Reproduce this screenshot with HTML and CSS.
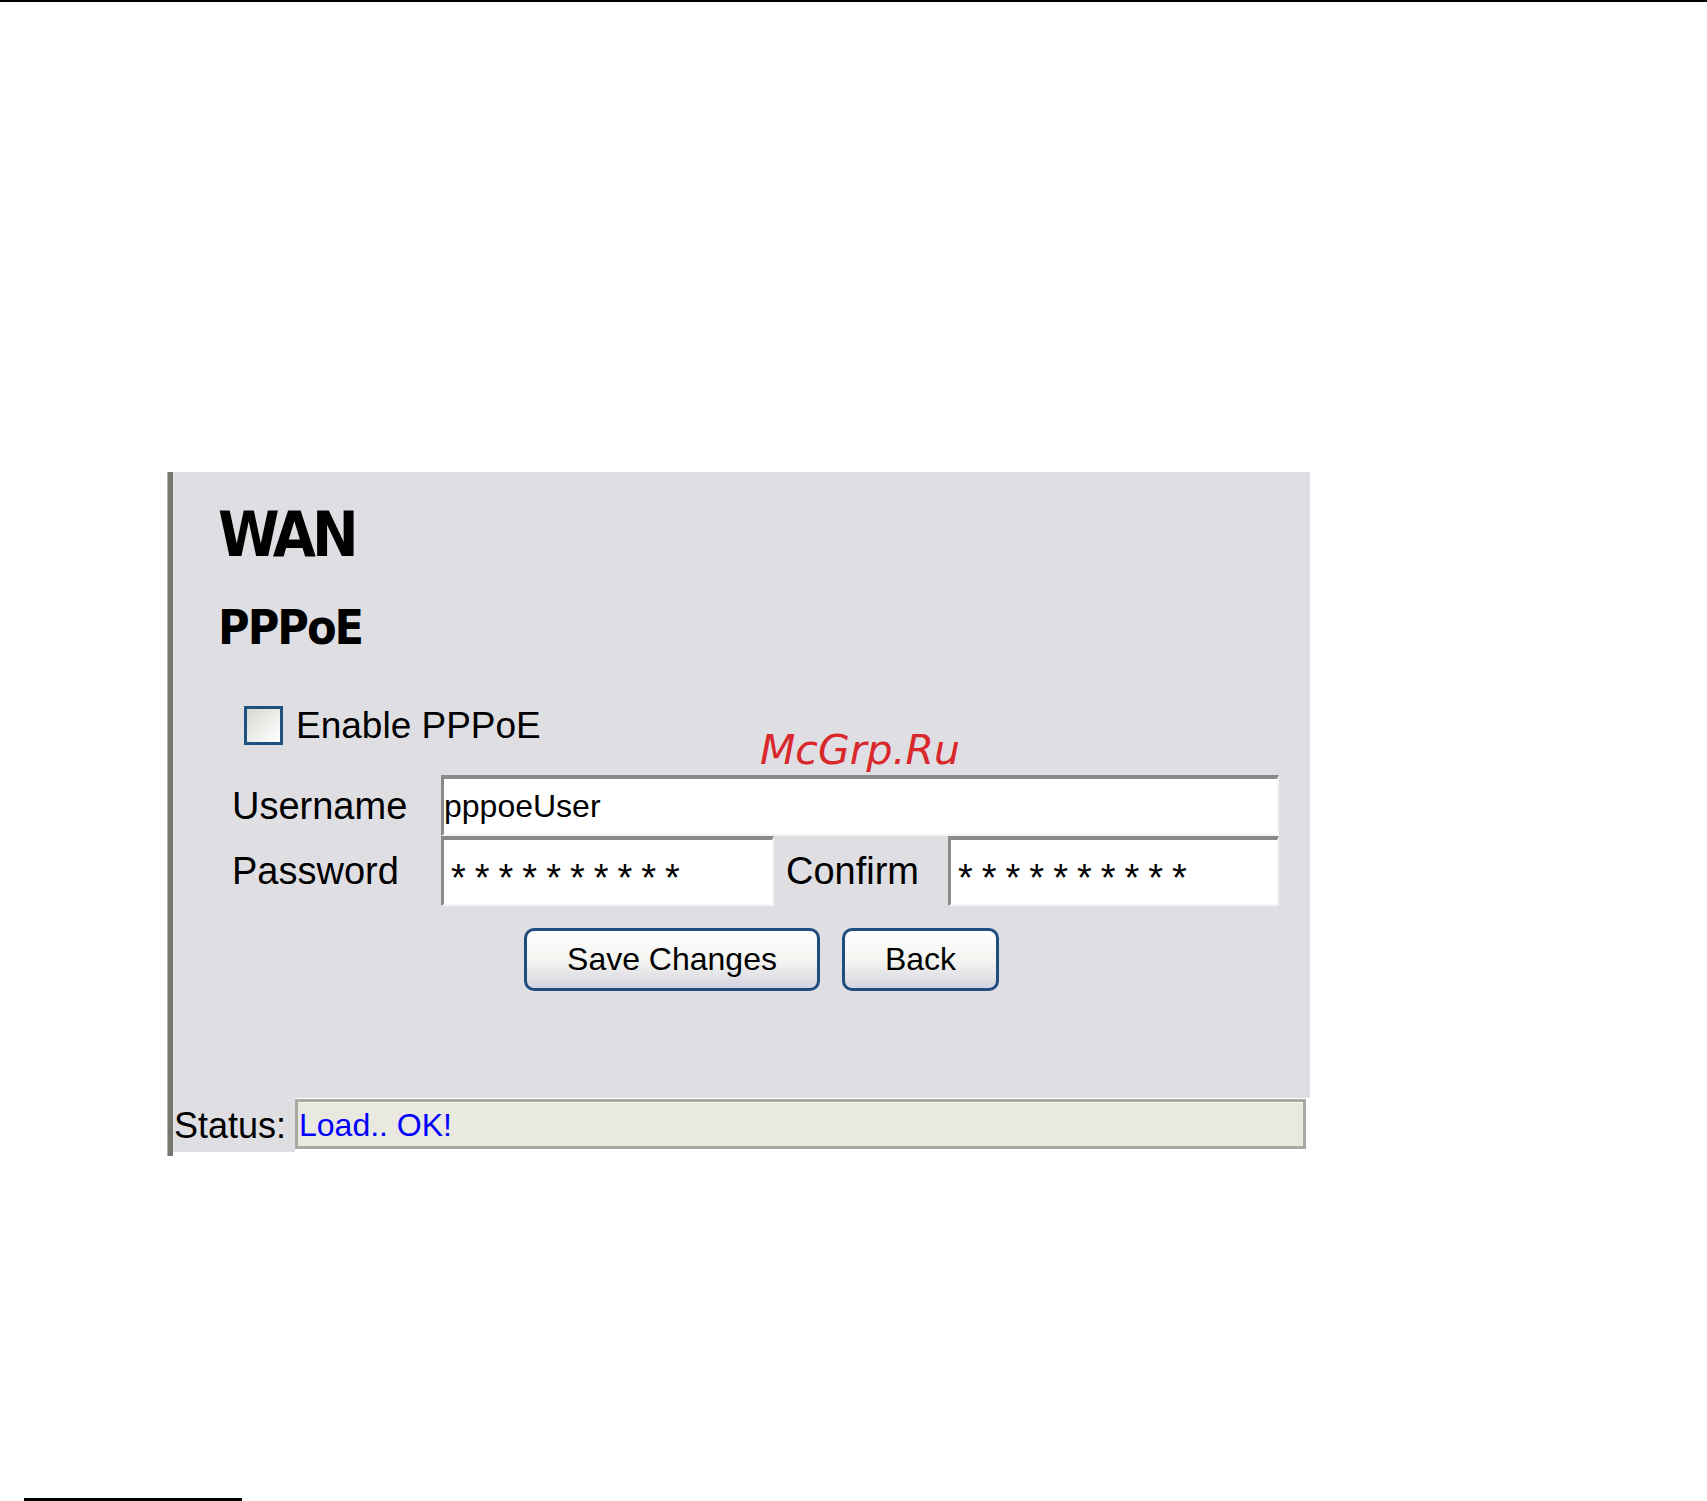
FILE: index.html
```html
<!DOCTYPE html>
<html lang="en">
<head>
    <meta charset="UTF-8" />
    <title>WAN - PPPoE</title>
    <link rel="stylesheet" href="styles.css">
</head>
<body>
    <div class="topline"></div>

    <div class="frame">
        <div class="panel">
            <h1>WAN</h1>
            <h2>PPPoE</h2>

            <label class="check">
                <input type="checkbox" id="enable_pppoe" />
                Enable PPPoE
            </label>

            <div class="mark">McGrp.Ru</div>

            <form class="grid" id="form-pppoe">
                <span class="lbl">Username</span>
                <input class="field wide" type="text" id="username" value="pppoeUser" />

                <span class="lbl">Password</span>
                <input class="field pass" type="text" id="password" value="**********" />
                <span class="lbl confirm">Confirm</span>
                <input class="field pass" type="text" id="confirm" value="**********" />

                <div class="buttons">
                    <button type="button" class="btn save">Save Changes</button>
                    <button type="button" class="btn back">Back</button>
                </div>
            </form>
        </div>

        <div class="status">
            <span class="status-label">Status:</span>
            <div class="status-box" id="status">Load.. OK!</div>
        </div>
    </div>

    <div class="footline"></div>
</body>
</html>
```

FILE: styles.css
```css
body {
    margin: 0;
    font-family: "Liberation Sans", Arial, sans-serif;
    color: #000;
    background-color: #fff;
}

.topline {
    height: 2px;
    background-color: #000;
}

.frame {
    margin: 470px 0 0 168px;
    width: 1137px;
    border-left: 5px solid #76766e;
    box-shadow: -1px 0 0 #b4b4ac;
}

.panel {
    position: relative;
    height: 626px;
    padding: 32px 0 0 45px;
    box-sizing: border-box;
    background-color: #dfdee3;
}

h1,
h2 {
    margin: 0;
    font-family: "Liberation Sans Narrow", "DejaVu Sans Condensed", "Liberation Sans", sans-serif;
    font-weight: bold;
}

h1 {
    font-size: 62px;
    line-height: 62px;
    letter-spacing: -4px;
}

h2 {
    margin-top: 37px;
    font-size: 48px;
    line-height: 48px;
    letter-spacing: -2px;
}

.check {
    display: flex;
    align-items: center;
    gap: 13px;
    height: 40px;
    margin: 54px 0 0 26px;
    font-size: 37px;
    line-height: 1;
}

.check input {
    appearance: none;
    width: 39px;
    height: 39px;
    margin: 0;
    border: 3px solid #1c5180;
    background: linear-gradient(135deg, #d8d8d2, #ffffff);
}

.mark {
    position: absolute;
    left: 587px;
    top: 258px;
    color: #d8282c;
    font-family: "DejaVu Sans", sans-serif;
    font-style: oblique;
    font-size: 41px;
    line-height: 1;
}

.grid {
    display: grid;
    grid-template-columns: 209px 333px 174px 331px;
    grid-template-rows: 61px 70px;
    align-items: center;
    margin: 30px 0 0 14px;
    font-size: 38px;
}

.lbl {
    line-height: 1;
}

.confirm {
    padding-left: 12px;
}

.field {
    align-self: stretch;
    margin: 0;
    padding: 0;
    box-sizing: border-box;
    border-style: solid;
    border-width: 4px 2px 2px 3px;
    border-color: #8a8a8a #f4f4f4 #f4f4f4 #8a8a8a;
    background-color: #fff;
    font-family: "Liberation Sans", Arial, sans-serif;
    font-size: 32px;
    color: #000;
    outline: none;
}

.wide {
    grid-column: 2 / 5;
}

.pass {
    padding: 12px 0 0 7px;
    font-size: 38px;
    letter-spacing: 9px;
}

.buttons {
    grid-column: 1 / 5;
    display: flex;
    justify-content: center;
    gap: 22px;
    margin-top: 22px;
    padding-left: 12px;
}

.btn {
    height: 63px;
    padding: 0;
    border: 3px solid #1f4d7e;
    border-radius: 10px;
    background: linear-gradient(#ffffff, #f3f3f0 55%, #d4d4e0);
    font-family: "Liberation Sans", Arial, sans-serif;
    font-size: 32px;
    color: #000;
    cursor: pointer;
}

.save {
    width: 296px;
}

.back {
    width: 157px;
}

.status {
    display: flex;
    height: 58px;
}

.status-label {
    width: 122px;
    height: 54px;
    padding: 2px 0 0 1px;
    box-sizing: border-box;
    background-color: #dfdee3;
    font-size: 36px;
    line-height: 52px;
}

.status-box {
    width: 1011px;
    height: 50px;
    margin-top: 1px;
    padding: 3px 0 0 1px;
    box-sizing: border-box;
    border: 3px solid #a9a9a2;
    box-shadow: inset 0 1px 0 #fafaf6;
    background-color: #e9e8e1;
    color: #0000ff;
    font-size: 32px;
    line-height: 41px;
}

.footline {
    margin: 342px 0 0 24px;
    width: 218px;
    height: 3px;
    background-color: #000;
}
```
